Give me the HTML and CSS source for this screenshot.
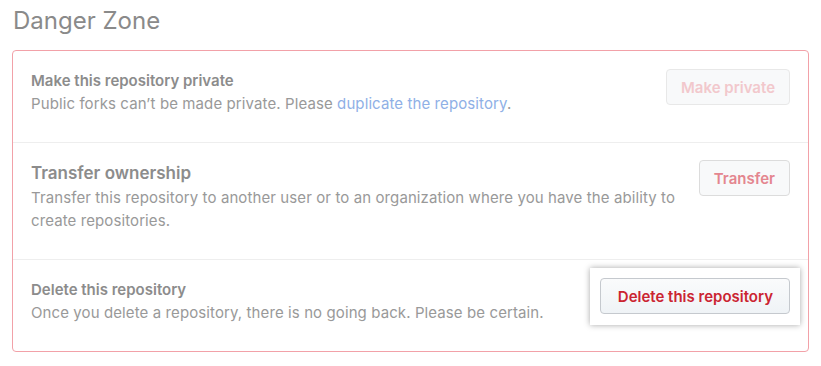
FILE: index.html
```
<!DOCTYPE html>
<html lang="en">
<head>
    <meta charset="UTF-8">
    <title>Danger Zone</title>
    <link rel="stylesheet" href="styles.css">
</head>
<body>
    <h2 class="subhead">Danger Zone</h2>

    <div class="danger-box">
        <div class="danger-row">
            <div class="row-text">
                <h4>Make this repository private</h4>
                <p>Public forks can’t be made private. Please <a href="#">duplicate the repository</a>.</p>
            </div>
            <button class="btn btn-disabled">Make private</button>
        </div>

        <div class="danger-row danger-row-tall">
            <div class="row-text">
                <h4 class="big">Transfer ownership</h4>
                <p>Transfer this repository to another user or to an organization where you have the ability to create repositories.</p>
            </div>
            <button class="btn btn-faded">Transfer</button>
        </div>

        <div class="danger-row">
            <div class="row-text">
                <h4>Delete this repository</h4>
                <p>Once you delete a repository, there is no going back. Please be certain.</p>
            </div>
            <div class="highlight">
                <button class="btn btn-danger">Delete this repository</button>
            </div>
        </div>
    </div>
</body>
</html>
```

FILE: styles.css
```
html, body {
    margin: 0;
    padding: 0;
    background: #fff;
    font-family: Inter, 'Liberation Sans', Arial, sans-serif;
}

body {
    padding: 8px 12px 0 12px;
    width: 797px;
}

.subhead {
    margin: 0 0 17px 1px;
    font-size: 24px;
    font-weight: 400;
    line-height: 25px;
    color: #8a8a8a;
}

/* Box */
.danger-box {
    border: 1px solid #f2a1a8;
    border-radius: 4px;
}

.danger-row {
    display: flex;
    align-items: flex-start;
    padding: 18px 18px 17px 18px;
    border-top: 1px solid #eeeeee;
}

.danger-row:first-child {
    border-top: 0;
}

.danger-row-tall {
    padding-top: 17px;
}

.row-text {
    flex: 1;
    margin-right: 18px;
}

.row-text h4 {
    margin: 0;
    font-size: 15px;
    line-height: 23px;
    font-weight: 600;
    color: #8c8c8c;
}

.row-text h4.big {
    font-size: 17px;
    line-height: 26px;
}

.row-text p {
    margin: 0 0 10px 0;
    font-size: 15px;
    line-height: 23px;
    letter-spacing: 0.1px;
    color: #999999;
}

.row-text a {
    color: #8fb0e6;
    text-decoration: none;
}

/* Buttons */
.btn {
    display: block;
    font-family: inherit;
    font-size: 15px;
    font-weight: 600;
    height: 36px;
    padding: 0 14px;
    border-radius: 4px;
    border: 1px solid #e3e3e3;
    background: #f8f9fa;
    white-space: nowrap;
    cursor: pointer;
}

.btn-disabled {
    color: #f2c8cc;
    border-color: #e8e8e8;
}

.btn-faded {
    color: #e4868f;
    border-color: #dcdcdc;
}

.btn-danger {
    color: #cb2431;
    background: linear-gradient(#fafbfc, #eff3f6);
    border-color: #c5c9ce;
    padding: 0 16px 0 17px;
}

.highlight {
    margin: -10px -10px -11px 0;
    padding: 10px 10px 11px 10px;
    background: #fff;
    box-shadow: 0 0 6px rgba(0, 0, 0, 0.35);
}
```
